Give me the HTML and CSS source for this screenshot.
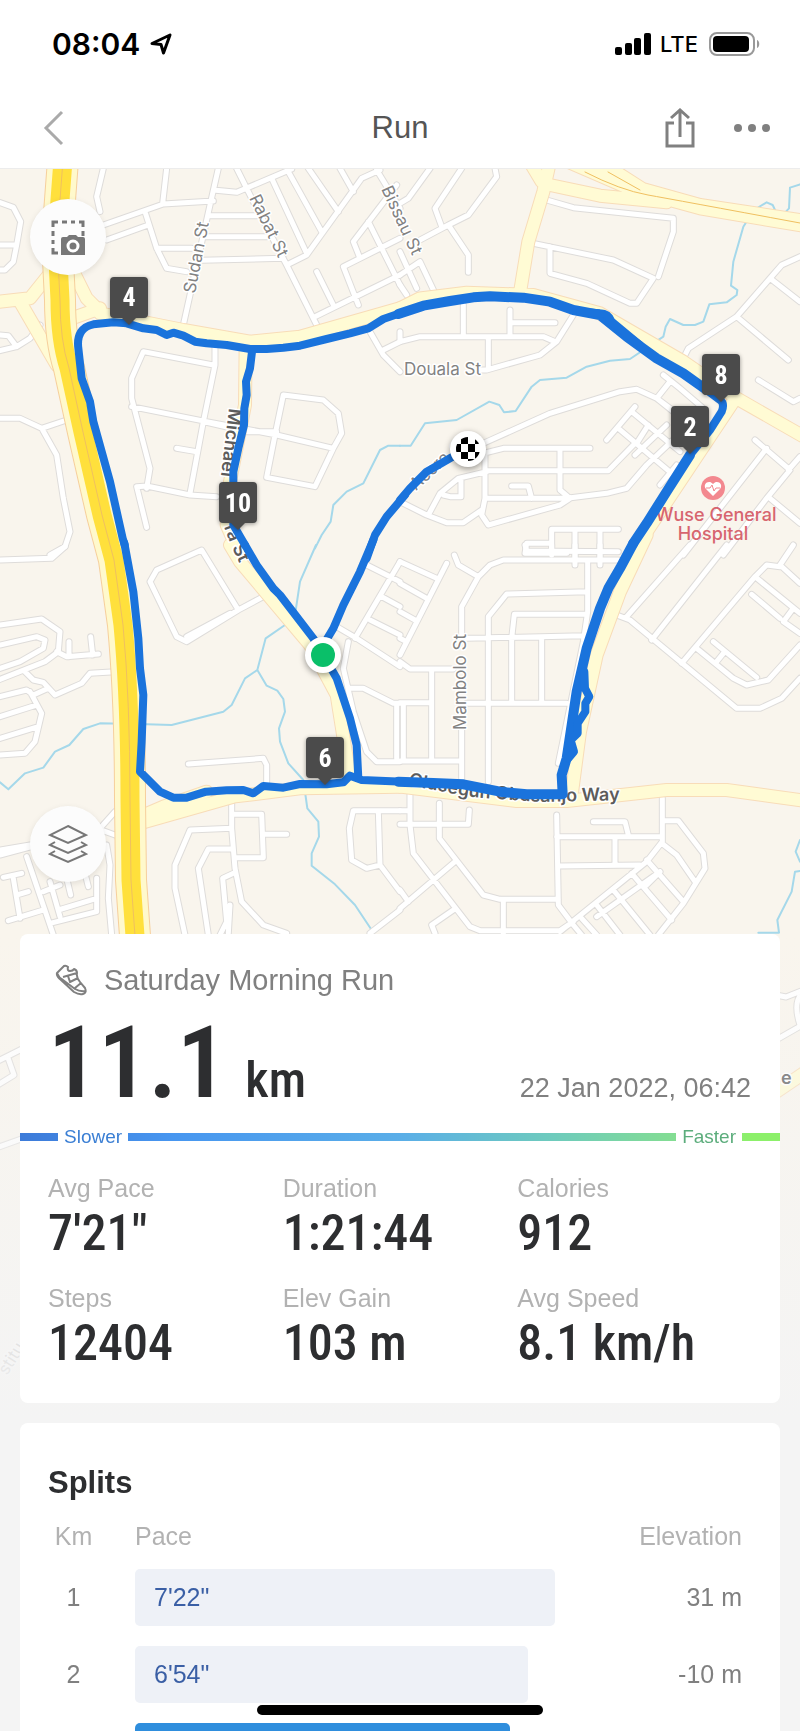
FILE: index.html
```html
<!DOCTYPE html>
<html lang="en">

<head>
	<meta charset="utf-8">
	<meta name="viewport" content="width=device-width, initial-scale=1">
	<title>Run</title>
	<link rel="stylesheet" href="styles.css">
</head>

<body>
	<header>
		<div class="status_bar">
			<span class="clock">08:04</span>
			<svg class="icon_location" width="22" height="22" viewBox="0 0 22 22"><path d="M20 2L2 10.500L11 11.500L13.500 20Z"/></svg>
			<span class="spacer"></span>
			<svg width="36" height="22" viewBox="0 0 36 22"><rect x="0" y="14" width="7" height="8" rx="2"/><rect x="10" y="10" width="7" height="12" rx="2"/><rect x="19" y="5" width="7" height="17" rx="2"/><rect x="29" y="0" width="7" height="22" rx="2"/></svg>
			<span class="network">LTE</span>
			<svg width="51" height="24" viewBox="0 0 51 24"><rect class="battery_case" x="1" y="1" width="44" height="22" rx="7"/><rect x="4" y="4" width="36" height="16" rx="4"/><path class="battery_tip" d="M48 8C51 9 51 15 48 16Z"/></svg>
		</div>
		<nav class="nav_bar">
			<button type="button" class="back" aria-label="Back"><svg width="24" height="36" viewBox="0 0 24 36"><path class="icon_back" d="M20 2L4 18L20 34"/></svg></button>
			<h1>Run</h1>
			<div class="nav_right">
				<button type="button" aria-label="Share"><svg width="30" height="40" viewBox="0 0 30 40"><path class="icon_share" d="M9 15H2V38H28V15H21M15 29V2M6 10L15 2L24 10"/></svg></button>
				<button type="button" aria-label="More"><svg width="36" height="10" viewBox="0 0 36 10"><circle cx="4" cy="5" r="4"/><circle cx="18" cy="5" r="4"/><circle cx="32" cy="5" r="4"/></svg></button>
			</div>
		</nav>
	</header>

	<main>
		<svg class="map" viewBox="0 169 800 1251">
			<defs>
				<g id="streets">
					<path transform="translate(0 165) scale(.333333)" d="M0 113L40 127L62 170L50 240L40 290L15 315H0M0 240H50M310 10L290 95L300 140M310 180L490 117L640 108M500 10L488 115M320 225L445 180M435 140L470 250L500 310L560 320M470 250H575M655 10L630 120L550 480M640 75L710 82L875 12M630 152H770M615 215H800M605 286L850 280M710 10L760 110L860 300L960 500M860 300L920 270L1085 40L1140 15M815 40L920 265M865 20L965 200M925 10L1015 140M1020 10L1060 80M1130 15L1200 130M1190 60L1060 230L1080 280M1200 220L1030 305L1075 420M1105 170L1200 360M950 320L1000 420M945 455L1200 330M1110 500L1150 570L1200 620M1150 555L1200 530M645 545V600L610 770L570 985M640 600L430 560L395 640V700L450 910L440 970M395 725L620 770L830 810L1000 850M610 770L740 800L830 800M530 850L590 860M440 1087L410 965L440 963L570 990L650 995M850 690L970 705L1015 745L1025 805L1000 850L945 965L800 937L825 810ZM0 510L25 512L50 545L0 557M50 545L90 520L120 480L90 470M0 760H60L125 790L200 765M125 790L170 870L190 1000L210 1100L195 1145L150 1170"/>
					<path transform="translate(400 165) scale(.333333)" d="M90 10L25 100L0 115M185 10L105 130L125 185M285 10L290 35L205 150L145 180L60 225M145 180L205 270V322M60 290L105 385M0 330L60 290M0 260L50 370M0 360L20 390M440 105L520 128L820 160V200L775 335M400 235L640 285L760 340L710 415H690L560 355L450 325V245M1200 275L1145 300L1110 340L1010 455L865 550L845 590M1110 340L1200 410M1010 455L1165 585M190 420V510M330 435V515M330 473H465M0 530L60 515H430L465 530M520 450L470 530L420 570L260 615H240M265 520V610M0 525V500M1075 645L1180 710L1200 700M790 630L840 670L910 730M810 650L770 700L850 760M250 835L450 745L660 680L710 673L770 700L820 740M705 725L620 825M695 740L840 860M655 790L815 925M780 960L830 900M800 780L705 870M745 780L710 835M830 815L740 900L680 970L620 985L500 1000M570 850H310L250 865M255 870V1000L245 1050L265 1080L480 1020L510 1000H255M255 917H625L700 840M480 850V975L510 1000M260 920L175 940L120 985L85 1050M130 990L150 995H183V945M0 1010L80 1050L140 1073H190L245 1035M335 963H385L395 1000M1065 825L1170 915L1100 1000L970 1170M1100 850L850 1170M1200 875L1165 915M1110 1000L1200 1075M655 1093H455V1170M525 1095V1200M600 1095V1200M455 1135H380L375 1165H500"/>
					<path transform="translate(0 545) scale(.333333)" d="M0 45L155 40L195 5M0 240L125 222L180 260L175 320L135 350L0 403M0 300L110 275L135 285L130 310L60 350L0 370M170 320L200 335L295 327M207 290V335M272 275L278 330M75 380L100 405L130 412L165 450L245 415L270 385L345 380M0 455L80 435L100 450L145 430M90 440L125 505L105 590L75 625L0 630M0 515L110 480M0 580L115 545M605 15L715 195L560 290L530 275L450 110L470 75ZM560 275L690 205M715 195L790 155M565 657L790 640L800 660V710M345 800L300 850L0 930M290 850L345 870M320 900L330 960L325 1060L335 1170M0 915L90 900M80 935L160 1170M40 1000L60 1120M10 997L65 985M50 1050L85 1040M25 1127L130 1095M290 1000V1100L150 1135M130 1040L180 1020M150 1010L180 1115M175 1095L290 1060M200 1000L212 1050M255 985L265 1025M695 770V850L705 970L725 1070L790 1140L860 1165M695 850L570 855L525 960V1030L555 1170M700 912H625L595 970L625 1170M700 985L668 1000L680 1130L660 1170M690 1080L685 1165M705 808H785L790 938H705M790 868H860M1200 797H1060L1048 850L1055 945L1100 970L1140 960M1135 800L1140 960L1200 1040M1110 1165L1200 1095M1010 245L1070 280L1200 365M1045 290L1030 370L1060 500L1100 620L1130 650H1200M1050 430H1090L1180 475H1200M1100 60L1200 110M1200 50L1065 280M1145 155L1200 185M1110 225L1200 270M1190 480V640"/>
					<path transform="translate(400 545) scale(.333333)" d="M0 50L110 100M140 55L0 330M0 115L80 160M0 200L45 225M0 280L20 290M0 350L30 372H160M95 375V645M0 473H95M10 475V645M0 648H180M163 30L175 60L235 95L185 185V270M185 550V700M375 0L380 18L655 20M455 0V20M525 0V40M600 0V42M235 95L270 60L310 45H655M563 50V200L550 290L475 655M560 140L320 147L265 215V710M560 208H343L335 280M200 280L550 272M425 280V470M335 280V470M200 475H500M870 0L680 215M980 0L755 285M650 210L690 225L1010 490H1080L1145 460L1200 400M1180 0L1140 60L1200 115M1140 65L1100 60L1065 95L845 355M1065 95L1200 205M1055 148L1140 220M1180 190L1150 230L1200 265M890 310L1000 400L1040 420L1105 405L1200 300M940 290L1070 397M970 325L950 350M30 740V840L40 925L210 1145L240 1157H480L520 1130M0 797H30M0 838H205L208 795M118 775V880L250 1050L300 1063H475M165 950L0 1090M0 1035L25 1070M160 1095L95 1140L105 1165M310 1065V1170M470 810L475 1080L520 1140L545 1170M470 875H780M645 880V960M475 963L720 960M580 830H675L685 870M787 760V890L740 950L480 1160M790 827H835L910 925L915 970L850 1075L775 1170M785 895L830 930L885 1010M740 945L850 1070M695 985L815 1125M640 1035L750 1170M590 1080L660 1170M545 1120L590 1170M780 980L590 1115M740 1020L780 980"/>
					<path d="M-4 1062L24 1048M8 1058L14 1075L-4 1086M-4 1148L24 1138M776 995L786 997L804 990M800 1025Q792 1000 804 992M776 1040L804 1024"/>
				</g>
				<g id="roads">
					<path transform="translate(0 165) scale(.333333)" d="M-20 412L90 400L170 300M60 410L170 600M225 330L260 400L300 440M215 460L300 430M300 445L550 495L750 530L900 515L1200 430M737 540L735 720L690 950L680 1080L720 1170"/>
					<path transform="translate(400 165) scale(.333333)" d="M0 430L60 400L200 383L400 390L600 445L850 590L1010 700L1220 820M450 -10L430 80L385 230L362 370M395 0L425 50M480 -20L700 75L900 130L1220 184M540 -20L720 70L900 120L1220 168M600 -10L740 80M450 60L600 92L800 112M1000 710L900 860L680 1190"/>
					<path transform="translate(0 545) scale(.333333)" d="M690 0L720 50L930 300L1010 450L1050 700M420 815L490 785L620 740M420 835L700 755L900 730L1200 725"/>
					<path transform="translate(400 545) scale(.333333)" d="M0 725L350 768H500L800 735H980L1220 768M740 -30L660 140L590 330L540 560L515 750"/>
					<path d="M776 1092L804 1073"/>
				</g>
				<path id="highway" d="M63 160L57 240L60 300Q60 340 69 368L83 432L102 515L114 560L123 625Q130 700 130 800L131 880L136 950"/>
				<path id="street_michael" d="M229 408L221 475L216 500"/>
				<path id="street_michael_end" d="M224 527Q232 550 248 580"/>
				<path id="street_accra" d="M416 491L452 458L480 442"/>
				<path id="street_obasanjo" d="M408 785L470 797L540 802L635 800"/>
				<linearGradient id="fade" x1="0" y1="0" x2="0" y2="1">
					<stop offset="0" stop-color="#f4f4f4" stop-opacity="0"/>
					<stop offset="1" stop-color="#f4f4f4"/>
				</linearGradient>
			</defs>

			<g class="water">
				<path transform="translate(0 165) scale(.333333)" d="M1200 842H1165L1140 855L1090 955L1040 980L1000 1020L992 1070L965 1110L945 1150"/>
				<path transform="translate(400 165) scale(.333333)" d="M0 842H32L75 775L170 765L268 710L298 720L312 742L347 738L395 665L420 645L500 638L560 605L630 587L690 582L790 515L797 485L810 462L850 480H885L910 470L928 418L980 412L1010 390L1012 375L993 362L1000 290L1030 185L1062 135L1100 112L1118 120L1130 145L1150 148L1167 130L1170 68L1200 58"/>
				<path transform="translate(0 545) scale(.333333)" d="M948 0L900 110L885 210L855 240L797 280L772 375L800 422L832 437L850 462L855 500L837 550L840 590L865 655L910 705L922 790L955 830L957 875L935 925V962L1005 1018L1065 1080L1115 1155M772 375L735 400L695 480L670 500L515 540L440 538L300 535L250 552L208 600L165 620L130 668L75 685L25 733L0 712"/>
				<path transform="translate(400 545) scale(.333333)" d="M1200 885L1187 920L1200 950M1200 978L1185 980L1175 1040L1132 1125L1137 1163H1075"/>
			</g>

			<use href="#streets" class="street_case"/>
			<use href="#streets" class="street"/>
			<use href="#roads" class="road_case"/>
			<use href="#roads" class="road"/>
			<use href="#highway" class="highway_case"/>
			<use href="#highway" class="highway_side"/>
			<use href="#highway" class="highway"/>
			<use href="#highway" class="highway_line"/>
			<path class="road_line" d="M585 172Q620 190 648 195T800 223M608 172L640 190"/>

			<g class="label">
				<text transform="translate(195 294) rotate(-79)">Sudan St</text>
				<text transform="translate(249 198) rotate(64)">Rabat St</text>
				<text transform="translate(381 189) rotate(65)">Bissau St</text>
				<text x="404" y="375">Douala St</text>
				<text transform="translate(466 730) rotate(-90)">Mambolo St</text>
				<text><textPath href="#street_accra">Accra St</textPath></text>
				<g class="label_strong">
					<text><textPath href="#street_michael">Michael</textPath></text>
					<text><textPath href="#street_michael_end">ra St</textPath></text>
					<text><textPath href="#street_obasanjo">Olusegun Obasanjo Way</textPath></text>
					<text x="781" y="1084">e</text>
				</g>
				<text transform="translate(7 1376) rotate(-58)">stitu</text>
			</g>

			<g class="hospital">
				<circle cx="713" cy="488" r="12"/>
				<path class="heart" d="M713 496L706 489C702 484 709 479 713 484C717 479 724 484 720 489Z"/>
				<path class="pulse" d="M706 488H710L712 485L714 491L716 488H720"/>
				<text x="716" y="521">Wuse General</text>
				<text x="713" y="540">Hospital</text>
			</g>

			<g class="route">
				<path transform="translate(0 165) scale(.333333)" d="M1200 445L1150 462L1105 490L1050 505L980 522L900 542L850 548L800 552H750L680 540L620 535L585 530L550 512L520 503L500 510L470 495L430 490L380 475L340 472L280 478C245 485 230 510 235 550L245 640L270 710L280 770L330 950L368 1120L374 1140M757 552L750 610L738 650L740 690L733 730L732 780L715 850L700 920V1080L735 1140M1215 990L1160 1055L1125 1110L1100 1180"/>
				<path class="route_wide" transform="translate(400 165) scale(.333333)" d="M-5 447L70 422L150 408L220 397L270 394L370 398L450 410L520 435L600 450L680 515L770 580L850 625L920 675M870 870L800 980L740 1075L700 1135"/>
				<path transform="translate(400 165) scale(.333333)" d="M540 440L600 445Q625 445 635 470L720 540M900 660L960 705Q975 715 965 740L930 795L870 870M190 857L150 880L80 920L30 970L0 1005"/>
				<path transform="translate(0 545) scale(.333333)" d="M373 -5L400 140L415 280L420 370L430 450L425 590L420 680L480 740L520 758H560L618 740L680 736L730 735L760 745L790 723L850 728L900 717L980 718L1030 712L1050 692L1085 705L1210 710M735 0L770 60L820 130L840 150L940 280L970 330L1010 400L1050 520L1070 600L1075 700M1120 -15L1080 80L1030 180L1000 250L970 300"/>
				<path class="route_wide" transform="translate(400 545) scale(.333333)" d="M-5 710L100 714L190 718L300 740L380 748H488L485 690L500 640L515 540L530 440L560 310L600 190L625 130L660 70L700 -5"/>
				<path transform="translate(400 545) scale(.333333)" d="M553 380L555 430L568 455L556 475V500L533 535V565L512 585L522 620L505 640"/>
			</g>

			<g class="pin">
				<path transform="translate(110 277)" d="M4 0H34Q38 0 38 4V37Q38 41 34 41H26L19 48L12 41H4Q0 41 0 37V4Q0 0 4 0Z"/><text x="129" y="306">4</text>
				<path transform="translate(219 482)" d="M4 0H34Q38 0 38 4V37Q38 41 34 41H26L19 48L12 41H4Q0 41 0 37V4Q0 0 4 0Z"/><text x="238" y="512">10</text>
				<path transform="translate(702 354)" d="M4 0H34Q38 0 38 4V37Q38 41 34 41H26L19 48L12 41H4Q0 41 0 37V4Q0 0 4 0Z"/><text x="721" y="384">8</text>
				<path transform="translate(671 406)" d="M4 0H34Q38 0 38 4V37Q38 41 34 41H26L19 48L12 41H4Q0 41 0 37V4Q0 0 4 0Z"/><text x="690" y="436">2</text>
				<path transform="translate(306 737)" d="M4 0H34Q38 0 38 4V37Q38 41 34 41H26L19 48L12 41H4Q0 41 0 37V4Q0 0 4 0Z"/><text x="325" y="767">6</text>
			</g>
			<g class="point">
				<circle cx="323" cy="655" r="18"/>
				<circle class="point_start" cx="323" cy="655" r="12"/>
				<circle cx="468" cy="449" r="18"/>
			</g>
			<clipPath id="flag"><circle cx="468" cy="449" r="12"/></clipPath>
			<path clip-path="url(#flag)" d="M461 437H468V444H461ZM475 437H482V444H475ZM454 444H461V452H454ZM468 444H475V452H468ZM461 452H468V459H461ZM475 452H482V459H475ZM454 459H461V466H454ZM468 459H475V466H468Z"/>

			<rect x="0" y="934" width="800" height="486" fill="url(#fade)"/>
		</svg>

		<div class="content">
			<div class="map_tools">
				<button type="button" aria-label="Map snapshot"><svg width="34" height="35" viewBox="0 0 34 35"><path class="icon_dash" d="M2 7V2H7M11 2H16M20 2H24M28 2H32V7M32 11V16M2 11V16M2 20V24M2 28V33H7"/><path d="M10 19Q10 17 12 17H16L18 15H25L27 17H32Q34 17 34 19V35H10Z"/><circle class="lens" cx="22" cy="26" r="5"/></svg></button>
				<button type="button" aria-label="Map layers"><svg width="40" height="40" viewBox="0 0 40 40"><path class="icon_layers" d="M20 2L38 11L20 19L2 11ZM7 18L2 21L20 29L38 21L33 18M7 27L2 30L20 38L38 30L33 27"/></svg></button>
			</div>

			<section class="card">
				<div class="card_title">
					<svg width="32" height="32" viewBox="0 0 32 32"><path class="icon_shoe" d="M2 9L9 2Q11 1 13 3Q12 7 15 7Q18 7 19 5Q22 6 22 9Q21 13 25 18L30 24Q32 29 28 30Q24 31 19 28L6 16Q1 12 2 9ZM2 9Q4 14 8 16L20 25Q25 28 31 27M22 9L8 13M23 14L15 18L13 12M26 19L20 24"/></svg>
					<h2>Saturday Morning Run</h2>
				</div>
				<div class="summary">
					<p class="distance">11.1<span class="unit">km</span></p>
					<time datetime="2022-01-22T06:42">22 Jan 2022, 06:42</time>
				</div>
				<div class="speed_scale">
					<span class="slower">Slower</span>
					<span class="faster">Faster</span>
				</div>
				<dl class="stats">
					<div><dt>Avg Pace</dt><dd>7'21"</dd></div>
					<div><dt>Duration</dt><dd>1:21:44</dd></div>
					<div><dt>Calories</dt><dd>912</dd></div>
					<div><dt>Steps</dt><dd>12404</dd></div>
					<div><dt>Elev Gain</dt><dd>103 m</dd></div>
					<div><dt>Avg Speed</dt><dd>8.1 km/h</dd></div>
				</dl>
			</section>

			<section class="card splits">
				<h2>Splits</h2>
				<table>
					<thead>
						<tr><th class="km">Km</th><th>Pace</th><th class="elevation">Elevation</th></tr>
					</thead>
					<tbody>
						<tr><td class="km">1</td><td><div class="bar" style="width: 94%">7'22"</div></td><td class="elevation">31 m</td></tr>
						<tr><td class="km">2</td><td><div class="bar" style="width: 88%">6'54"</div></td><td class="elevation">-10 m</td></tr>
						<tr><td class="km"></td><td><div class="bar fastest" style="width: 84%"></div></td><td class="elevation"></td></tr>
					</tbody>
				</table>
			</section>
		</div>
	</main>
	<div class="home_indicator"></div>
</body>
</html>
```

FILE: styles.css
```css
* {
	margin: 0;
	padding: 0;
	box-sizing: border-box;
}

body {
	display: flex;
	flex-direction: column;
	height: 100vh;
	overflow: hidden;
	background: #f4f4f4;
	font-family: "Liberation Sans", Arial, sans-serif;
	color: #2d2e30;
}

h1, h2, th {
	font-weight: normal;
}

button {
	display: flex;
	align-items: center;
	justify-content: center;
	border: none;
	background: none;
}

svg {
	display: block;
}

header {
	background: #fff;
	border-bottom: 1px solid #ececec;
}

.status_bar {
	display: flex;
	align-items: center;
	height: 88px;
	padding: 0 40px 0 52px;
	font-family: Inter, sans-serif;
	color: #000;
}

.clock {
	font-size: 30px;
	font-weight: 600;
}

.icon_location {
	margin-left: 10px;
	fill: none;
	stroke: #000;
	stroke-width: 3;
	stroke-linejoin: round;
}

.spacer {
	flex: 1;
}

.network {
	margin: 0 11px 0 9px;
	font-size: 22px;
	font-weight: 500;
}

.battery_case {
	fill: none;
	stroke: #999;
	stroke-width: 2;
}

.battery_tip {
	fill: #999;
}

.nav_bar {
	display: grid;
	grid-template-columns: 1fr auto 1fr;
	align-items: center;
	height: 80px;
	padding: 0 30px;
	fill: #808080;
}

.nav_bar h1 {
	font-size: 31px;
	color: #555;
}

.back {
	justify-self: start;
	padding: 0 12px;
}

.nav_right {
	display: flex;
	align-items: center;
	justify-content: flex-end;
	gap: 39px;
}

.icon_back, .icon_share {
	fill: none;
	stroke: #808080;
	stroke-width: 3;
}

.icon_back {
	stroke: #aaa;
}

main {
	display: grid;
	flex: 1;
	min-height: 0;
	overflow: hidden;
}

.map, .content {
	grid-area: 1 / 1;
}

.map {
	width: 100%;
	background: #f9f5ed;
}

/* map */
.water, .street_case, .street, .road_case, .road, .highway_case, .highway_side, .highway, .highway_line, .road_line, .route {
	fill: none;
	stroke-linejoin: round;
	stroke-linecap: round;
}

.water path, #streets path, #roads path, .route path {
	vector-effect: non-scaling-stroke;
}

.water {
	stroke: #a5d8ea;
	stroke-width: 2;
}

.street_case {
	stroke: #dedcda;
	stroke-width: 7;
}

.street {
	stroke: #fff;
	stroke-width: 5;
}

.road_case {
	stroke: #f8dcb8;
	stroke-width: 14;
}

.road {
	stroke: #fffbd4;
	stroke-width: 12;
}

.highway_case {
	stroke: #f6cf9c;
	stroke-width: 32;
}

.highway_side {
	stroke: #fff9cc;
	stroke-width: 30;
}

.highway {
	stroke: #ffe03c;
	stroke-width: 19;
}

.highway_line, .road_line {
	stroke: #f0c060;
	stroke-width: 1;
}

.route {
	stroke: #1a73dc;
	stroke-width: 8;
}

.route .route_wide {
	stroke-width: 10;
}

.label {
	font-family: Inter, sans-serif;
	font-size: 17px;
	fill: #828282;
	stroke: #fff;
	stroke-width: 3;
	stroke-linejoin: round;
	paint-order: stroke;
}

.label_strong {
	font-size: 18px;
	font-weight: 600;
	fill: #5c5c5c;
}

.hospital {
	font-family: Inter, sans-serif;
	font-size: 18px;
	font-weight: 500;
	text-anchor: middle;
	fill: #d7656f;
}

.hospital circle {
	fill: #f3888f;
}

.hospital .heart {
	fill: #fff;
}

.hospital .pulse {
	fill: none;
	stroke: #f3888f;
}

.pin {
	font-size: 26px;
	font-weight: bold;
	text-anchor: middle;
	fill: #4b4b4b;
	filter: drop-shadow(0 1px 2px rgba(0, 0, 0, .4));
}

.pin text {
	fill: #fff;
}

.pin text, .distance, .stats dd {
	font-family: "Roboto Condensed", "Liberation Sans", sans-serif;
}

.point {
	fill: #fff;
	filter: drop-shadow(0 2px 3px rgba(0, 0, 0, .4));
}

.point .point_start {
	fill: #0abf69;
}

.map_tools {
	display: flex;
	flex-direction: column;
	justify-content: space-between;
	align-items: flex-start;
	height: 765px;
	padding: 30px 10px 52px;
}

.map_tools button {
	width: 76px;
	height: 76px;
	border-radius: 50%;
	background: #fcfcfc;
	box-shadow: 0 2px 6px rgba(0, 0, 0, .1);
	fill: #777;
}

.icon_dash, .icon_layers {
	fill: none;
	stroke: #777;
	stroke-width: 3;
}

.icon_layers {
	stroke-width: 2;
}

.lens {
	fill: #777;
	stroke: #fff;
	stroke-width: 3;
}

/* cards */
.content {
	z-index: 1;
	padding: 0 20px;
}

.card {
	margin-bottom: 20px;
	padding-bottom: 32px;
	border-radius: 8px;
	background: #fff;
}

.card_title {
	display: flex;
	align-items: center;
	gap: 17px;
	padding: 28px 35px 0;
	color: #808080;
}

.card_title h2 {
	font-size: 29px;
	line-height: 36px;
}

.icon_shoe {
	fill: none;
	stroke: #808080;
	stroke-width: 2;
	stroke-linejoin: round;
}

.summary {
	display: flex;
	justify-content: space-between;
	align-items: baseline;
	padding: 15px 29px 0 28px;
}

.distance {
	font-size: 100px;
	font-weight: 600;
	line-height: 100px;
}

.unit {
	margin-left: 18px;
	font-size: 50px;
	font-weight: 500;
	line-height: 50px;
}

.summary time {
	font-size: 27px;
	color: #808080;
}

.speed_scale {
	display: flex;
	justify-content: space-between;
	height: 8px;
	margin-top: 20px;
	padding: 0 38px;
	background: linear-gradient(to right, #3d7bd9, #4796f0 20%, #5aaee8 50%, #6ecbbd 70%, #83dd93 86%, #8cf06a 96%);
	font-size: 19px;
	line-height: 8px;
}

.speed_scale span {
	padding: 0 6px;
	background: #fff;
}

.slower {
	color: #3b7fd4;
}

.faster {
	color: #5cad7c;
}

.stats {
	display: grid;
	grid-template-columns: repeat(3, 1fr);
	row-gap: 20px;
	padding: 30px 28px 0;
}

.stats div {
	width: max-content;
}

.stats dt {
	font-size: 25px;
	line-height: 34px;
	color: #b2b2b2;
}

.stats dd {
	font-size: 50px;
	font-weight: 500;
	line-height: 56px;
}

.splits {
	padding: 40px 38px 0 28px;
}

.splits h2 {
	font-size: 31px;
	font-weight: bold;
	line-height: 40px;
}

table {
	width: 100%;
	table-layout: fixed;
	border-collapse: collapse;
	font-size: 25px;
}

th {
	height: 56px;
	padding-top: 10px;
	text-align: left;
	color: #b2b2b2;
}

td {
	height: 77px;
	color: #808080;
}

.km {
	width: 87px;
	padding-right: 36px;
	text-align: center;
}

.elevation {
	width: 160px;
	text-align: right;
}

.bar {
	height: 57px;
	padding-left: 19px;
	border-radius: 5px;
	background: #eef1f7;
	line-height: 57px;
	color: #3a5fa5;
}

.fastest {
	background: #2f8edd;
}

.home_indicator {
	position: fixed;
	z-index: 2;
	bottom: 16px;
	left: 50%;
	width: 286px;
	height: 10px;
	margin-left: -143px;
	border-radius: 5px;
	background: #000;
}
```
